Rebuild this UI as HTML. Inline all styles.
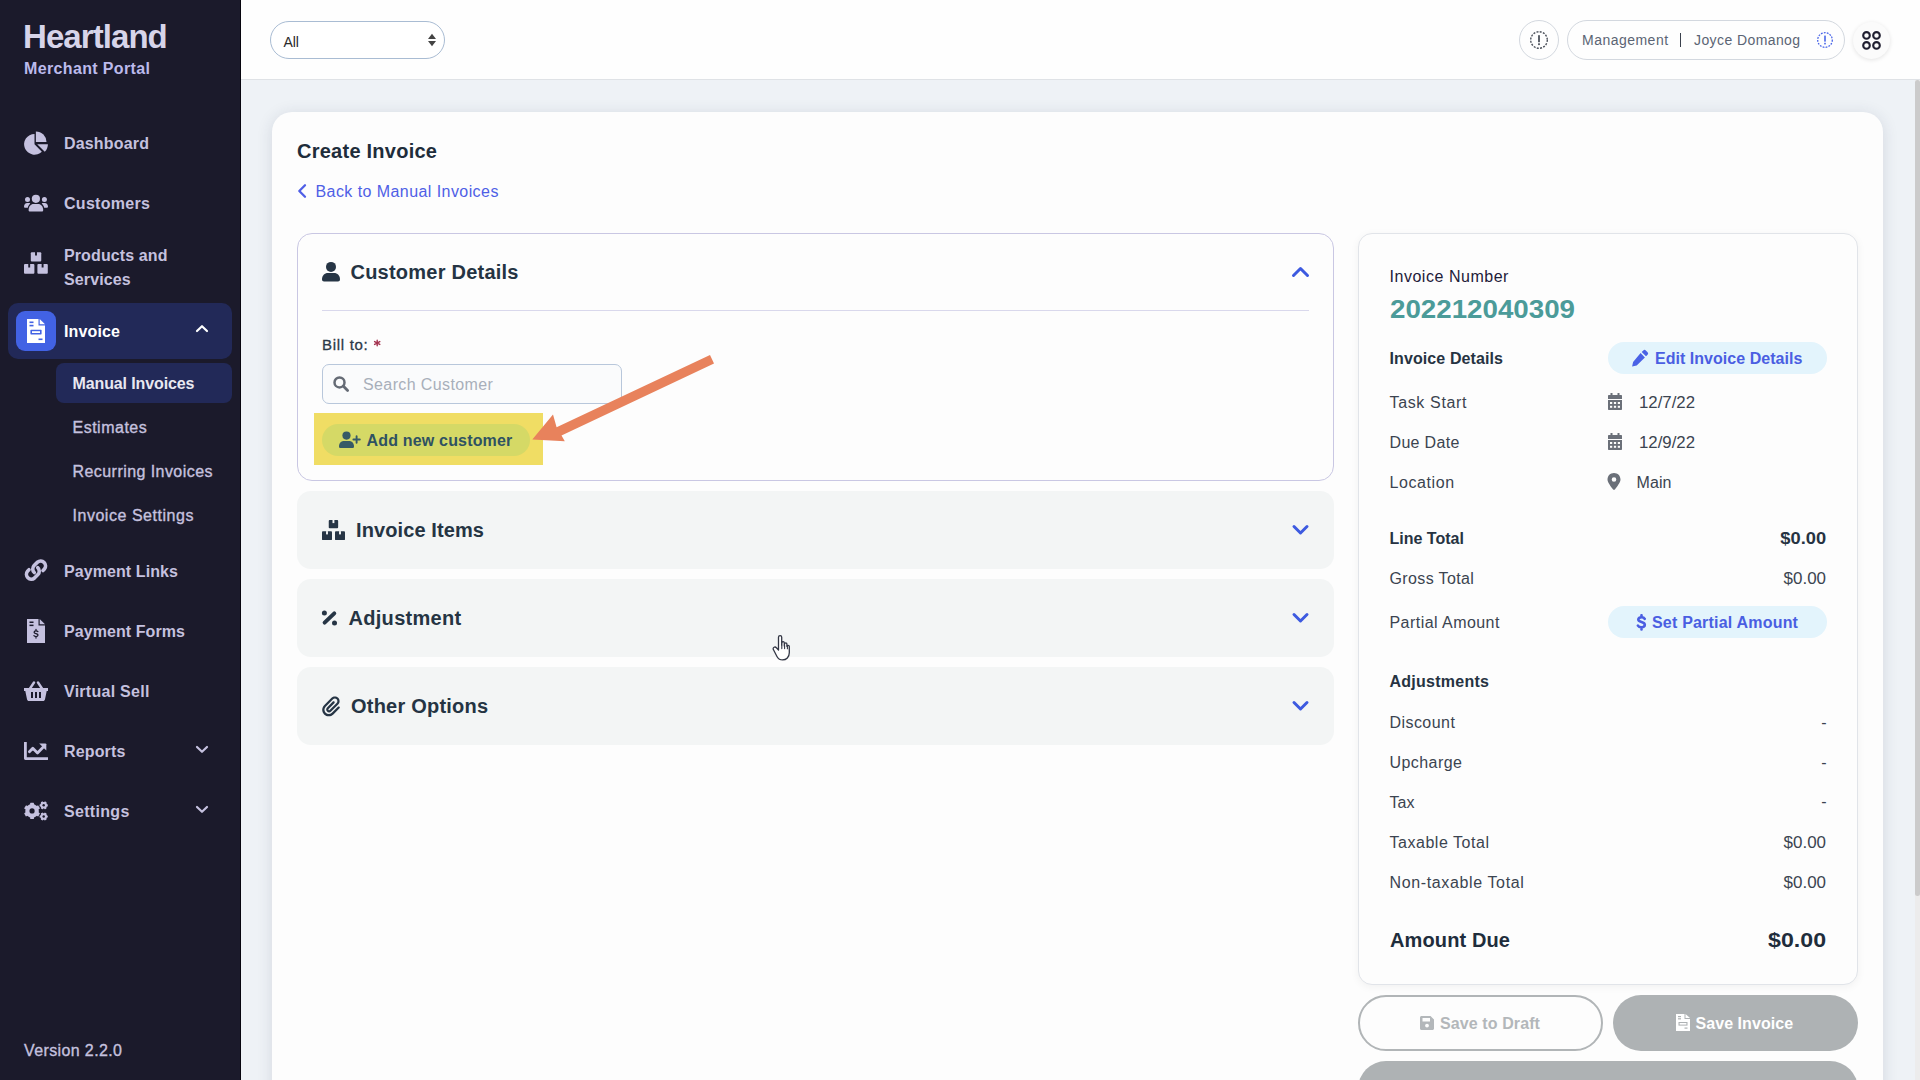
<!DOCTYPE html>
<html><head><meta charset="utf-8">
<style>
*{margin:0;padding:0;box-sizing:border-box}
html,body{width:1920px;height:1080px;overflow:hidden;background:#eef2f6;font-family:"Liberation Sans",sans-serif}
.a{position:absolute;white-space:nowrap;line-height:1}
svg{position:absolute;display:block}
#side{position:absolute;left:0;top:0;width:240px;height:1080px;background:#1b1a2b}
#sideline{position:absolute;left:240px;top:0;width:1px;height:1080px;background:#07060f}
.nv{font-size:16px;font-weight:bold;color:#c5c1df}
.sub{font-size:16px;color:#c5c1df;-webkit-text-stroke:.35px #c5c1df}
#hdr{position:absolute;left:241px;top:0;width:1679px;height:80px;background:#fefefe;border-bottom:1px solid #dfe2e6}
#card{position:absolute;left:272px;top:112px;width:1611px;height:1100px;background:#fdfdfd;border-radius:20px;box-shadow:0 2px 16px rgba(40,50,80,.13)}
.ttl{font-size:20px;font-weight:bold;color:#253443}
.pnl{position:absolute;left:297px;width:1037px;height:78px;background:#f3f5f5;border-radius:14px}
.rt{font-size:16px;color:#3b4450;letter-spacing:.5px}
.rb{font-size:16px;font-weight:bold;color:#263342}
</style></head><body>
<div id="side">
  <div class="a" style="left:23px;top:19.6px;font-size:33px;font-weight:bold;color:#d7d4e9;letter-spacing:-.93px">Heartland</div>
  <div class="a" style="left:24px;top:61px;font-size:16px;font-weight:bold;color:#bcbaec;letter-spacing:.36px">Merchant Portal</div>

  <!-- Dashboard -->
  <svg style="left:20px;top:126px" width="32" height="34" viewBox="0 0 32 34"><g fill="#c5c1df"><path d="M14.5 18.3V7.9A10.4 10.4 0 1 0 21.85 25.65Z"/><path d="M15.9 16.1V5.5A10.6 10.6 0 0 1 26.5 16.1Z"/><path d="M17.2 18.3H27.9A10.7 10.7 0 0 1 24.77 25.87Z"/></g></svg>
  <div class="a nv" style="left:64px;top:135.7px;letter-spacing:.17px">Dashboard</div>
  <!-- Customers -->
  <svg style="left:24px;top:194px" width="24" height="19" viewBox="0 0 24 19"><g fill="#c5c1df"><circle cx="11.9" cy="4.8" r="4.1"/><circle cx="3.5" cy="5.4" r="2.5"/><circle cx="20.4" cy="5.4" r="2.5"/><path d="M4.6 16.2C4.6 12.6 6.8 10.1 9.6 10.1h4.6c2.8 0 5 2.5 5 6.1 0 .8-.6 1.4-1.4 1.4H6c-.8 0-1.4-.6-1.4-1.4z"/><path d="M0 12.8C0 10.6 1.4 9 3.2 9h1.6c.6 0 1.1.1 1.5.4-1.3 1.1-2.2 2.7-2.5 4.3H.9c-.5 0-.9-.4-.9-.9z"/><path d="M24 12.8C24 10.6 22.6 9 20.8 9h-1.6c-.6 0-1.1.1-1.5.4 1.3 1.1 2.2 2.7 2.5 4.3h2.9c.5 0 .9-.4.9-.9z"/></g></svg>
  <div class="a nv" style="left:64px;top:195.5px;letter-spacing:.29px">Customers</div>
  <!-- Products -->
  <svg style="left:24px;top:252px" width="24" height="22" viewBox="0 0 24 22"><g fill="#c5c1df"><rect x="6.8" y=".2" width="10.45" height="9.4" rx="1"/><rect x="0" y="12.1" width="10.4" height="9.6" rx="1"/><rect x="13.4" y="12.1" width="10.4" height="9.6" rx="1"/></g><g fill="#1b1a2b"><rect x="11.05" y="0" width="1.9" height="3.5"/><rect x="4.25" y="11.9" width="1.9" height="3.6"/><rect x="17.65" y="11.9" width="1.9" height="3.6"/></g></svg>
  <div class="a nv" style="left:64px;top:247.5px;letter-spacing:.11px">Products and</div>
  <div class="a nv" style="left:64px;top:271.5px;letter-spacing:.11px">Services</div>
  <!-- Invoice active -->
  <div style="position:absolute;left:8px;top:303px;width:224px;height:56px;background:#222958;border-radius:10px"></div>
  <div style="position:absolute;left:16px;top:311px;width:40px;height:40px;background:#4262e4;border-radius:9px"></div>
  <svg style="left:27px;top:319px" width="18" height="24" viewBox="0 0 18 24"><path fill="#fff" d="M0 0h11.5v6.5H18V24H0z"/><path fill="#fff" d="M12.7 0L18 5.3h-5.3z"/><rect x="2.5" y="2.5" width="4" height="1.6" fill="#4262e4"/><rect x="2.5" y="5.8" width="4" height="1.6" fill="#4262e4"/><rect x="3.4" y="10.8" width="11.2" height="4.6" rx=".6" fill="#4262e4"/><rect x="5" y="12.2" width="8" height="1.8" fill="#fff"/><rect x="11.5" y="19.5" width="4" height="1.6" fill="#4262e4"/></svg>
  <div class="a nv" style="left:64px;top:323.5px;color:#fff;letter-spacing:.14px">Invoice</div>
  <svg style="left:195px;top:324px" width="14" height="9" viewBox="0 0 14 9"><path d="M2 7L7 2.2 12 7" fill="none" stroke="#fff" stroke-width="2.2" stroke-linecap="round" stroke-linejoin="round"/></svg>
  <div style="position:absolute;left:56px;top:363px;width:176px;height:40px;background:#222958;border-radius:8px"></div>
  <div class="a nv" style="left:72.5px;top:376px;color:#e8e8f1;letter-spacing:-.12px">Manual Invoices</div>
  <div class="a sub" style="left:72.5px;top:419.6px;letter-spacing:.5px">Estimates</div>
  <div class="a sub" style="left:72.5px;top:463.8px;letter-spacing:.44px">Recurring Invoices</div>
  <div class="a sub" style="left:72.5px;top:507.6px;letter-spacing:.53px">Invoice Settings</div>
  <!-- Payment Links -->
  <svg style="left:24px;top:558px" width="24" height="24" viewBox="0 0 24 24"><path d="M10.3 14.5a4.8 4.8 0 0 1-.2-6.9l3.4-3.4a4.9 4.9 0 0 1 6.9 6.9l-1.4 1.4" fill="none" stroke="#c5c1df" stroke-width="3.6" stroke-linecap="round"/><path d="M13.7 9.7a4.8 4.8 0 0 1 .2 6.9l-3.4 3.4a4.9 4.9 0 0 1-6.9-6.9l1.4-1.4" fill="none" stroke="#c5c1df" stroke-width="3.6" stroke-linecap="round"/></svg>
  <div class="a nv" style="left:64px;top:563.6px;letter-spacing:.08px">Payment Links</div>
  <!-- Payment Forms -->
  <svg style="left:27px;top:619px" width="18" height="24" viewBox="0 0 18 24"><path fill="#c5c1df" d="M0 0h11.5v6.5H18V24H0z"/><path fill="#c5c1df" d="M12.7 0L18 5.3h-5.3z"/><rect x="2.5" y="2.5" width="4" height="1.5" fill="#1b1a2b"/><rect x="2.5" y="5.6" width="4" height="1.5" fill="#1b1a2b"/><path d="M10.9 12.6c-.4-.5-1.1-.8-1.9-.8-1.1 0-1.9.6-1.9 1.4 0 1.8 3.9 1 3.9 2.9 0 .9-.9 1.5-2 1.5-.9 0-1.7-.4-2.1-.9M9 10.4v1.3M9 17.7v1.4" fill="none" stroke="#1b1a2b" stroke-width="1.3" stroke-linecap="round"/></svg>
  <div class="a nv" style="left:64px;top:623.6px;letter-spacing:.07px">Payment Forms</div>
  <!-- Virtual Sell -->
  <svg style="left:24px;top:681px" width="24" height="20" viewBox="0 0 24 20"><path fill="#c5c1df" d="M0 7h24v3h-1.3l-1.7 8.2c-.2 1-1 1.8-2 1.8H5c-1 0-1.8-.8-2-1.8L1.3 10H0z"/><path d="M6 7.5L10 1.5M18 7.5L14 1.5" stroke="#c5c1df" stroke-width="2.4" stroke-linecap="round"/><rect x="7" y="11" width="2" height="6" fill="#1b1a2b"/><rect x="11" y="11" width="2" height="6" fill="#1b1a2b"/><rect x="15" y="11" width="2" height="6" fill="#1b1a2b"/></svg>
  <div class="a nv" style="left:64px;top:683.5px;letter-spacing:.27px">Virtual Sell</div>
  <!-- Reports -->
  <svg style="left:24px;top:742px" width="24" height="18" viewBox="0 0 24 18"><path d="M1.4 .6V16.6H23.2" fill="none" stroke="#c5c1df" stroke-width="2.8" stroke-linecap="round" stroke-linejoin="round"/><path d="M5.4 9.8L8.8 6.3l4.7 4.6 6.3-6.3" fill="none" stroke="#c5c1df" stroke-width="2.8" stroke-linecap="round" stroke-linejoin="round"/><path fill="#c5c1df" d="M15.2 1.4h6.2c.5 0 .9.4.9.9v6.2z"/></svg>
  <div class="a nv" style="left:64px;top:743.5px;letter-spacing:.15px">Reports</div>
  <svg style="left:195px;top:745px" width="14" height="9" viewBox="0 0 14 9"><path d="M2 2L7 6.8 12 2" fill="none" stroke="#c5c1df" stroke-width="2.2" stroke-linecap="round" stroke-linejoin="round"/></svg>
  <!-- Settings -->
  <svg style="left:20px;top:796px" width="32" height="28" viewBox="0 0 32 28"><g fill="#c5c1df"><circle cx="12.06" cy="14.9" r="6.8"/><rect x="10.16" y="6.80" width="3.8" height="16.20" rx=".5" transform="rotate(0 12.06 14.9)"/><rect x="10.16" y="6.80" width="3.8" height="16.20" rx=".5" transform="rotate(60 12.06 14.9)"/><rect x="10.16" y="6.80" width="3.8" height="16.20" rx=".5" transform="rotate(120 12.06 14.9)"/><circle cx="23.7" cy="9.3" r="3.3"/><rect x="22.60" y="5.20" width="2.2" height="8.20" rx=".5" transform="rotate(30 23.7 9.3)"/><rect x="22.60" y="5.20" width="2.2" height="8.20" rx=".5" transform="rotate(90 23.7 9.3)"/><rect x="22.60" y="5.20" width="2.2" height="8.20" rx=".5" transform="rotate(150 23.7 9.3)"/><circle cx="23.7" cy="20.5" r="3.3"/><rect x="22.60" y="16.40" width="2.2" height="8.20" rx=".5" transform="rotate(30 23.7 20.5)"/><rect x="22.60" y="16.40" width="2.2" height="8.20" rx=".5" transform="rotate(90 23.7 20.5)"/><rect x="22.60" y="16.40" width="2.2" height="8.20" rx=".5" transform="rotate(150 23.7 20.5)"/></g><circle cx="12.06" cy="14.9" r="2.6" fill="#1b1a2b"/><circle cx="23.7" cy="9.3" r="1.2" fill="#1b1a2b"/><circle cx="23.7" cy="20.5" r="1.2" fill="#1b1a2b"/></svg>
  <div class="a nv" style="left:64px;top:804.2px;letter-spacing:.32px">Settings</div>
  <svg style="left:195px;top:805px" width="14" height="9" viewBox="0 0 14 9"><path d="M2 2L7 6.8 12 2" fill="none" stroke="#c5c1df" stroke-width="2.2" stroke-linecap="round" stroke-linejoin="round"/></svg>

  <div class="a sub" style="left:24px;top:1042.5px;letter-spacing:.38px">Version 2.2.0</div>
</div>
<div id="sideline"></div>

<div id="hdr"></div>
<!-- HEADER -->
<div style="position:absolute;left:270px;top:21px;width:175px;height:38px;border:1px solid #a9bcd3;border-radius:19px;background:#fff"></div>
<div class="a" style="left:283.5px;top:34.6px;font-size:14px;color:#2a2a2a;letter-spacing:-.1px">All</div>
<svg style="left:427px;top:33px" width="10" height="14" viewBox="0 0 10 14"><path fill="#444" d="M5 .8L9 6H1zM5 13.2L9 8H1z"/></svg>

<div style="position:absolute;left:1519px;top:20px;width:40px;height:40px;border:1px solid #d3d8df;border-radius:50%"></div>
<svg style="left:1529px;top:30px" width="20" height="20" viewBox="0 0 20 20"><circle cx="10" cy="10" r="8.3" fill="none" stroke="#4c515b" stroke-width="1.4" stroke-dasharray="2 1.3"/><rect x="9.1" y="5.2" width="1.8" height="7" fill="#4c515b"/><rect x="9.1" y="13.3" width="1.8" height="1.8" fill="#4c515b"/></svg>
<div style="position:absolute;left:1567px;top:20px;width:278px;height:40px;border:1px solid #d3d8df;border-radius:20px"></div>
<div class="a" style="left:1582px;top:33px;font-size:14px;color:#5b6474;letter-spacing:.48px">Management</div>
<div style="position:absolute;left:1680px;top:33px;width:1.3px;height:14px;background:#3a404c"></div>
<div class="a" style="left:1694px;top:33px;font-size:14px;color:#5b6474;letter-spacing:.41px">Joyce Domanog</div>
<svg style="left:1816px;top:31px" width="18" height="18" viewBox="0 0 18 18"><circle cx="9" cy="9" r="7.3" fill="none" stroke="#4a66e8" stroke-width="1.3" stroke-dasharray="1.8 1.2"/><rect x="8.2" y="4.6" width="1.6" height="6" fill="#4a66e8"/><rect x="8.2" y="11.8" width="1.6" height="1.6" fill="#4a66e8"/></svg>
<div style="position:absolute;left:1853px;top:22px;width:37px;height:37px;border-radius:50%;background:#fbfbfb;box-shadow:0 1px 4px rgba(0,0,0,.11)"></div>
<svg style="left:1861px;top:30px" width="21" height="21" viewBox="0 0 21 21"><g fill="none" stroke="#1f1e30" stroke-width="2.1"><circle cx="5.5" cy="5.4" r="3.3"/><circle cx="15.5" cy="5.4" r="3.3"/><circle cx="5.5" cy="15.4" r="3.3"/><circle cx="15.5" cy="15.4" r="3.3"/></g></svg>

<!-- scrollbar -->
<div style="position:absolute;left:1915px;top:80px;width:5px;height:1000px;background:#ececec"></div>
<div style="position:absolute;left:1915px;top:80px;width:5px;height:816px;background:#cbcbcb;border-radius:3px"></div>

<div id="card"></div>
<!-- MAIN -->
<div class="a ttl" style="left:297px;top:141.2px;letter-spacing:.25px;color:#1f2d3b">Create Invoice</div>
<svg style="left:296px;top:183px" width="12" height="16" viewBox="0 0 12 16"><path d="M9 2.2L3.3 8 9 13.8" fill="none" stroke="#4f5fe6" stroke-width="2.3" stroke-linecap="round" stroke-linejoin="round"/></svg>
<div class="a" style="left:315.5px;top:184.4px;font-size:16px;color:#4f5fe6;letter-spacing:.43px">Back to Manual Invoices</div>

<!-- Customer details panel -->
<div style="position:absolute;left:297px;top:233px;width:1037px;height:248px;border:1px solid #c9c7e3;border-radius:15px;background:#fdfdfd"></div>
<svg style="left:321px;top:261px" width="20" height="21" viewBox="0 0 20 21"><circle cx="10" cy="5.9" r="5" fill="#263545"/><path fill="#263545" d="M1 18.5C1 14.5 3.5 12 7 12h6c3.5 0 6 2.5 6 6.5 0 1.2-.8 2-2 2H3c-1.2 0-2-.8-2-2z"/></svg>
<div class="a ttl" style="left:350.5px;top:262px;letter-spacing:.23px">Customer Details</div>
<svg style="left:1290px;top:264px" width="21" height="15" viewBox="0 0 21 15"><path d="M3.5 11.5L10.5 4.5 17.5 11.5" fill="none" stroke="#3d5ae0" stroke-width="3" stroke-linecap="round" stroke-linejoin="round"/></svg>
<div style="position:absolute;left:322px;top:309.5px;width:987px;height:1.5px;background:#d9d8ec"></div>
<div class="a" style="left:322px;top:337.3px;font-size:15px;color:#2c3a48;letter-spacing:.7px;-webkit-text-stroke:.3px #2c3a48">Bill to:</div>
<svg style="left:373px;top:339px" width="9" height="9" viewBox="0 0 9 9"><g stroke="#a3324f" stroke-width="1.4" stroke-linecap="round"><path d="M4.2 1.2v5.6M1.6 2.6l5.2 2.8M6.8 2.6l-5.2 2.8"/></g></svg>
<div style="position:absolute;left:322px;top:364px;width:300px;height:40px;border:1px solid #b8c7db;border-radius:7px;background:#fafbfc"></div>
<svg style="left:332px;top:375px" width="18" height="18" viewBox="0 0 18 18"><circle cx="7.5" cy="7.4" r="5" fill="none" stroke="#656b75" stroke-width="2.5"/><path d="M11.2 11.1l4.4 4.4" stroke="#656b75" stroke-width="2.8" stroke-linecap="round"/></svg>
<div class="a" style="left:363px;top:377.4px;font-size:16px;color:#a8afba;letter-spacing:.39px">Search Customer</div>
<div style="position:absolute;left:314px;top:413px;width:229px;height:52px;background:#f0dd64"></div>
<div style="position:absolute;left:322px;top:424px;width:208px;height:32px;background:#d5d966;border-radius:16px"></div>
<svg style="left:339px;top:431px" width="22" height="18" viewBox="0 0 22 18"><circle cx="7.5" cy="4.6" r="4.1" fill="#375a66"/><path fill="#375a66" d="M0 15.5C0 12.2 2 10 5 10h5c3 0 5 2.2 5 5.5 0 1-.7 1.6-1.6 1.6H1.6C.7 17.1 0 16.5 0 15.5z"/><path d="M17.6 5.3v6.4M14.4 8.5h6.4" stroke="#375a66" stroke-width="1.9" stroke-linecap="round"/></svg>
<div class="a" style="left:366.5px;top:433.3px;font-size:16px;font-weight:bold;color:#2f5262;letter-spacing:.18px">Add new customer</div>
<svg style="left:520px;top:340px" width="210" height="120" viewBox="520 340 210 120"><path fill="#e8825c" d="M710 355L714 363.5 561.5 435.5 564.8 441.2 532.3 439.6 553 414.5 556.6 427.3Z"/></svg>

<!-- collapsed panels -->
<div class="pnl" style="top:491px"></div>
<svg style="left:322px;top:520px" width="24" height="21" viewBox="0 0 24 21"><g fill="#263545"><rect x="6.75" y="0" width="9.4" height="8.2" rx=".9"/><rect x="0" y="11.3" width="10" height="8.8" rx=".9"/><rect x="13" y="11.3" width="10" height="8.8" rx=".9"/></g><g fill="#f3f5f5"><rect x="10.5" y="-.2" width="1.9" height="3.3"/><rect x="4.05" y="11.1" width="1.9" height="3.3"/><rect x="17.05" y="11.1" width="1.9" height="3.3"/></g></svg>
<div class="a ttl" style="left:356px;top:520.3px;letter-spacing:.1px">Invoice Items</div>
<svg style="left:1290px;top:523px" width="21" height="15" viewBox="0 0 21 15"><path d="M4 3.5L10.5 10 17 3.5" fill="none" stroke="#3d5ae0" stroke-width="3" stroke-linecap="round" stroke-linejoin="round"/></svg>

<div class="pnl" style="top:579px"></div>
<svg style="left:320px;top:609px" width="18" height="18" viewBox="0 0 18 18"><g fill="#263545"><circle cx="4.4" cy="4" r="2.5"/><circle cx="14.5" cy="14" r="2.5"/></g><path d="M4.6 13.7L14.3 4.3" stroke="#263545" stroke-width="3.9" stroke-linecap="round"/></svg>
<div class="a ttl" style="left:348.5px;top:608px;letter-spacing:.3px">Adjustment</div>
<svg style="left:1290px;top:611px" width="21" height="15" viewBox="0 0 21 15"><path d="M4 3.5L10.5 10 17 3.5" fill="none" stroke="#3d5ae0" stroke-width="3" stroke-linecap="round" stroke-linejoin="round"/></svg>

<div class="pnl" style="top:667px"></div>
<svg style="left:322px;top:696px" width="18" height="20.5" viewBox="0 0 448 512"><path fill="#263545" d="M364.2 83.8c-24.4-24.4-64-24.4-88.4 0l-184 184c-42.1 42.1-42.1 110.3 0 152.4s110.3 42.1 152.4 0l152-152c10.9-10.9 28.7-10.9 39.6 0s10.9 28.7 0 39.6l-152 152c-64 64-167.6 64-231.6 0s-64-167.6 0-231.6l184-184c46.3-46.4 121.5-46.4 167.8 0s46.3 121.5 0 167.8l-176 176c-28.6 28.6-75 28.6-103.6 0s-28.6-75 0-103.6l144-144c10.9-10.9 28.7-10.9 39.6 0s10.9 28.7 0 39.6l-144 144c-6.7 6.7-6.7 17.7 0 24.4s17.7 6.7 24.4 0l176-176c24.4-24.4 24.4-64 0-88.4z"/></svg>
<div class="a ttl" style="left:351px;top:695.5px;letter-spacing:.22px">Other Options</div>
<svg style="left:1290px;top:699px" width="21" height="15" viewBox="0 0 21 15"><path d="M4 3.5L10.5 10 17 3.5" fill="none" stroke="#3d5ae0" stroke-width="3" stroke-linecap="round" stroke-linejoin="round"/></svg>

<!-- RIGHT PANEL -->
<div style="position:absolute;left:1358px;top:233px;width:500px;height:752px;border:1px solid #e1e4e9;border-radius:14px;background:#fdfdfd;box-shadow:0 2px 8px rgba(0,0,0,.05)"></div>
<div class="a" style="left:1389.5px;top:269.2px;font-size:16px;color:#1d2039;letter-spacing:.53px">Invoice Number</div>
<div class="a" style="left:1389.5px;top:297px;font-size:25px;font-weight:bold;color:#4b9b99;transform:scaleX(1.109);transform-origin:0 0">202212040309</div>
<div class="a rb" style="left:1389.5px;top:351.2px;letter-spacing:.1px">Invoice Details</div>
<div style="position:absolute;left:1608px;top:342px;width:219px;height:32px;background:#e3f4fc;border-radius:16px"></div>
<svg style="left:1631px;top:349px" width="18" height="18" viewBox="0 0 18 18"><path fill="#4a62e6" d="M12.3 1.4a1.8 1.8 0 0 1 2.5 0l1.8 1.8a1.8 1.8 0 0 1 0 2.5L15 7.3 10.7 3zM9.6 4.1l4.3 4.3-8.2 8.2-4.6 1 1-4.6z"/></svg>
<div class="a rb" style="left:1655px;top:351px;color:#4a5ee2;letter-spacing:.03px">Edit Invoice Details</div>

<div class="a rt" style="left:1389.5px;top:394.5px;letter-spacing:.65px">Task Start</div>
<svg style="left:1608px;top:393px" width="14" height="17" viewBox="0 0 14 17"><path fill="#6b7079" d="M2.5 0h2v2h5V0h2v2H13c.6 0 1 .4 1 1v3H0V3c0-.6.4-1 1-1h1.5zM0 7h14v9c0 .6-.4 1-1 1H1c-.6 0-1-.4-1-1z"/><g fill="#fdfdfd"><rect x="2" y="9" width="2.2" height="2"/><rect x="5.9" y="9" width="2.2" height="2"/><rect x="9.8" y="9" width="2.2" height="2"/><rect x="2" y="12.8" width="2.2" height="2"/><rect x="5.9" y="12.8" width="2.2" height="2"/><rect x="9.8" y="12.8" width="2.2" height="2"/></g></svg>
<div class="a rt" style="left:1638.5px;top:394.5px;letter-spacing:0;transform:scaleX(1.05);transform-origin:0 0">12/7/22</div>
<div class="a rt" style="left:1389.5px;top:434.5px;letter-spacing:.33px">Due Date</div>
<svg style="left:1608px;top:433px" width="14" height="17" viewBox="0 0 14 17"><path fill="#6b7079" d="M2.5 0h2v2h5V0h2v2H13c.6 0 1 .4 1 1v3H0V3c0-.6.4-1 1-1h1.5zM0 7h14v9c0 .6-.4 1-1 1H1c-.6 0-1-.4-1-1z"/><g fill="#fdfdfd"><rect x="2" y="9" width="2.2" height="2"/><rect x="5.9" y="9" width="2.2" height="2"/><rect x="9.8" y="9" width="2.2" height="2"/><rect x="2" y="12.8" width="2.2" height="2"/><rect x="5.9" y="12.8" width="2.2" height="2"/><rect x="9.8" y="12.8" width="2.2" height="2"/></g></svg>
<div class="a rt" style="left:1638.5px;top:434.5px;letter-spacing:0;transform:scaleX(1.05);transform-origin:0 0">12/9/22</div>
<div class="a rt" style="left:1389.5px;top:474.8px;letter-spacing:.58px">Location</div>
<svg style="left:1607px;top:473px" width="14" height="17" viewBox="0 0 14 17"><path fill="#6b7079" d="M7 0C3.2 0 .5 2.8.5 6.5c0 2.8 3.7 7.6 5.4 9.7.6.7 1.6.7 2.2 0 1.7-2.1 5.4-6.9 5.4-9.7C13.5 2.8 10.8 0 7 0zm0 4.2a2.3 2.3 0 1 1 0 4.6 2.3 2.3 0 0 1 0-4.6z"/></svg>
<div class="a rt" style="left:1636.5px;top:474.8px;letter-spacing:.1px">Main</div>

<div class="a rb" style="left:1389.5px;top:530.7px;letter-spacing:0">Line Total</div>
<div class="a rb" style="right:93.5px;top:530.7px;transform:scaleX(1.142);transform-origin:100% 0">$0.00</div>
<div class="a rt" style="left:1389.5px;top:571.2px;letter-spacing:.38px">Gross Total</div>
<div class="a rt" style="right:93.5px;top:571.2px;letter-spacing:0;transform:scaleX(1.06);transform-origin:100% 0">$0.00</div>
<div class="a rt" style="left:1389.5px;top:614.5px;letter-spacing:.45px">Partial Amount</div>
<div style="position:absolute;left:1608px;top:606px;width:219px;height:32px;background:#e3f4fc;border-radius:16px"></div>
<svg style="left:1636px;top:614px" width="11" height="17" viewBox="0 0 11 17"><path d="M8.7 4.9c-.5-1-1.6-1.6-3.2-1.6-1.9 0-3.2.9-3.2 2.3 0 3.2 6.5 1.8 6.5 5.2 0 1.5-1.4 2.5-3.4 2.5-1.6 0-2.9-.6-3.5-1.6M5.5 1.2v2M5.5 13.6v1.9" fill="none" stroke="#4a5ee2" stroke-width="2.6" stroke-linecap="round"/></svg>
<div class="a rb" style="left:1652px;top:614.5px;color:#4a5ee2;letter-spacing:.2px">Set Partial Amount</div>

<div class="a rb" style="left:1389.5px;top:674.3px;letter-spacing:.25px">Adjustments</div>
<div class="a rt" style="left:1389.5px;top:714.6px;letter-spacing:.44px">Discount</div>
<div class="a rt" style="right:93.5px;top:714.6px;margin-right:-.5px">-</div>
<div class="a rt" style="left:1389.5px;top:755px;letter-spacing:.43px">Upcharge</div>
<div class="a rt" style="right:93.5px;top:755px;margin-right:-.5px">-</div>
<div class="a rt" style="left:1389.5px;top:794.8px;letter-spacing:.04px">Tax</div>
<div class="a rt" style="right:93.5px;top:794.3px;margin-right:-.5px">-</div>
<div class="a rt" style="left:1389.5px;top:834.6px;letter-spacing:.53px">Taxable Total</div>
<div class="a rt" style="right:93.5px;top:834.6px;letter-spacing:0;transform:scaleX(1.06);transform-origin:100% 0">$0.00</div>
<div class="a rt" style="left:1389.5px;top:874.5px;letter-spacing:.63px">Non-taxable Total</div>
<div class="a rt" style="right:93.5px;top:874.5px;letter-spacing:0;transform:scaleX(1.06);transform-origin:100% 0">$0.00</div>

<div class="a" style="left:1390px;top:929.5px;font-size:20px;font-weight:bold;color:#1f2d3c;letter-spacing:.12px">Amount Due</div>
<div class="a" style="right:93.5px;top:929.5px;font-size:20px;font-weight:bold;color:#1f2d3c;transform:scaleX(1.158);transform-origin:100% 0">$0.00</div>

<div style="position:absolute;left:1358px;top:995px;width:245px;height:56px;border:2px solid #b1b5b7;border-radius:28px;background:#fdfdfd"></div>
<svg style="left:1420px;top:1016px" width="14" height="14" viewBox="0 0 14 14"><path fill="#b3b7ba" d="M0 1.5C0 .7.7 0 1.5 0h9L14 3.5v9c0 .8-.7 1.5-1.5 1.5h-11C.7 14 0 13.3 0 12.5zM2.5 2v3.5h7.5V2z"/><circle cx="7" cy="9.6" r="1.9" fill="#fdfdfd"/></svg>
<div class="a rb" style="left:1440px;top:1015.5px;color:#b3b7ba;letter-spacing:.1px">Save to Draft</div>
<div style="position:absolute;left:1613px;top:995px;width:245px;height:56px;border-radius:28px;background:#aeb2b4"></div>
<svg style="left:1676px;top:1014px" width="14" height="17" viewBox="0 0 14 17"><path fill="#fff" d="M0 0h8.5v5H14v12H0z"/><path fill="#fff" d="M9.5 0L14 4h-4.5z"/><rect x="2" y="2" width="3" height="1.2" fill="#aeb2b4"/><rect x="2" y="4.2" width="3" height="1.2" fill="#aeb2b4"/><rect x="2.5" y="8" width="9" height="3.6" fill="#aeb2b4"/><rect x="3.6" y="9" width="6.8" height="1.6" fill="#fff"/><rect x="8.5" y="13.5" width="3" height="1.2" fill="#aeb2b4"/></svg>
<div class="a rb" style="left:1695.5px;top:1015.5px;color:#fff;letter-spacing:.06px">Save Invoice</div>
<div style="position:absolute;left:1358px;top:1061px;width:500px;height:60px;border-radius:28px;background:#aeb2b4"></div>

<!-- cursor -->
<svg style="left:771px;top:633.5px" width="22" height="28" viewBox="0 0 22 28"><path d="M7.5 3.2c0-1 .8-1.6 1.6-1.6s1.6.7 1.6 1.6V11l.2-2.3c.1-.6.6-1 1.2-1 .7 0 1.2.5 1.2 1.2V12l.2-2.2c.1-.6.6-1 1.2-1 .7 0 1.2.5 1.2 1.2v2.3c.1-.6.6-1 1.2-1 .7 0 1.2.6 1.2 1.3v6.2c0 4.2-3 7.1-6.7 7.1-2.3 0-4.4-1.2-5.5-3.2L2.5 15.8c-.6-.9-.4-2 .5-2.5.8-.5 1.8-.3 2.4.5L7.5 16z" fill="#fff" stroke="#323644" stroke-width="1.3" stroke-linejoin="round"/><path d="M10.8 11v3.6M13.6 11.2v3.4M16.4 11.7v3" stroke="#323644" stroke-width="1.1" stroke-linecap="round"/></svg>
</body></html>
